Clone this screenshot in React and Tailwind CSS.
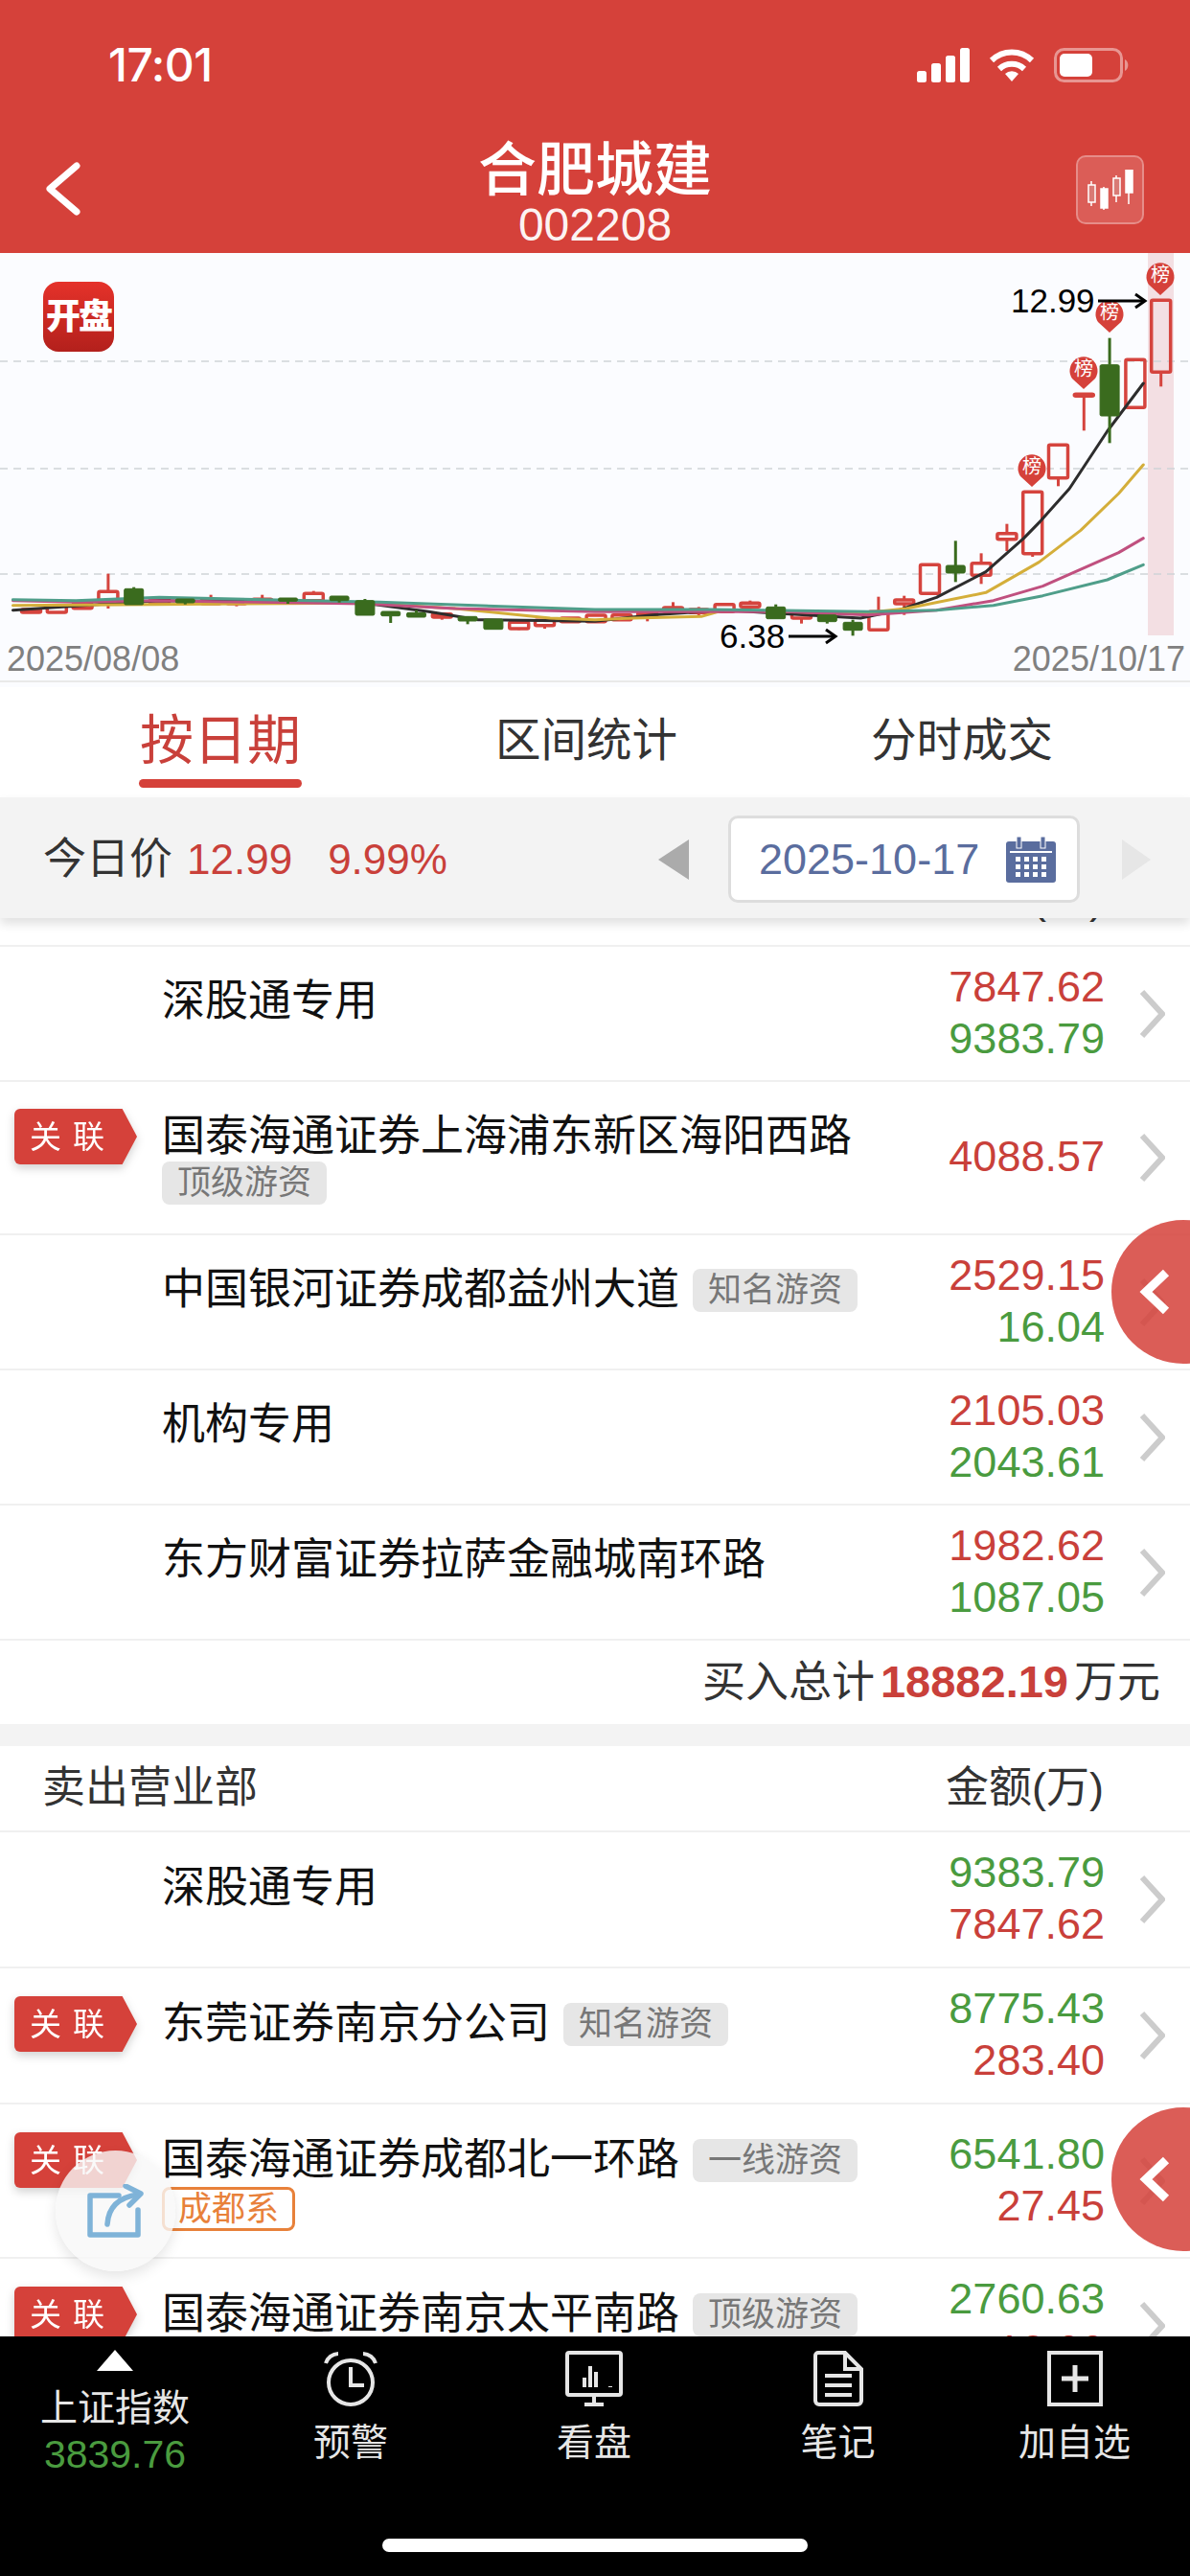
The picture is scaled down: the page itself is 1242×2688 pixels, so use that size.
import React from 'react';

const RED = '#c9403a';

// [kind, bodyTop, bodyBottom, wickTop, wickBottom] in zoomed chart units, y = 260 + v / 3
const candles = [
  ['r', 1128, 1137], ['r', 1117, 1137], ['r', 1110, 1124], ['r', 1072, 1105, 1016, 1125], ['g', 1063, 1113, 1058, 1113],
  ['r', 1095, 1110], ['g', 1095, 1107, 1095, 1112], ['r', 1098, 1110, 1082, 1110], ['r', 1100, 1110, 1100, 1118], ['r', 1096, 1108, 1082, 1108],
  ['g', 1092, 1102, 1092, 1110], ['r', 1078, 1100, 1070, 1100], ['g', 1086, 1100, 1086, 1106], ['g', 1100, 1146, 1095, 1146], ['g', 1134, 1148, 1134, 1170],
  ['g', 1138, 1152, 1130, 1152], ['r', 1142, 1152, 1142, 1160], ['g', 1150, 1164, 1150, 1174], ['g', 1158, 1190], ['r', 1168, 1188, 1168, 1192],
  ['r', 1162, 1178, 1162, 1188], ['r', 1155, 1166], ['r', 1146, 1166], ['r', 1145, 1160], ['r', 1138, 1148, 1138, 1165],
  ['r', 1122, 1135, 1105, 1135], ['r', 1128, 1138, 1120, 1150], ['r', 1112, 1135], ['r', 1108, 1120, 1100, 1135], ['g', 1120, 1157, 1112, 1157],
  ['r', 1140, 1155, 1140, 1172], ['g', 1145, 1166, 1145, 1172], ['g', 1168, 1193, 1160, 1210], ['r', 1135, 1192, 1088, 1196], ['r', 1098, 1110, 1085, 1145],
  ['r', 988, 1078], ['g', 990, 1014, 913, 1042], ['r', 983, 1021, 952, 1048], ['r', 890, 908, 860, 945], ['r', 760, 953, 760, 963],
  ['r', 613, 716, 613, 742], ['r', 454, 456, 454, 568], ['g', 362, 522, 278, 607], ['r', 346, 496], ['r', 160, 385, 160, 430],
];

// [x in the left half, y] then [x in the right half, y], zoomed units
const lines = [
  {
    color: '#2d2d2d',
    left: [[34, 1130], [285, 1110], [420, 1100], [960, 1108], [1130, 1135], [1260, 1160], [1568, 1165]],
    right: [[150, 1145], [340, 1130], [480, 1140], [700, 1155], [800, 1130], [900, 1090], [1030, 1010], [1130, 905], [1175, 850], [1250, 750], [1350, 570], [1445, 420]],
  },
  {
    color: '#d4ae3a',
    left: [[34, 1115], [400, 1112], [960, 1108], [1200, 1125], [1450, 1155], [1568, 1160]],
    right: [[100, 1155], [280, 1150], [340, 1130], [500, 1135], [700, 1140], [820, 1125], [1030, 1075], [1170, 980], [1280, 880], [1380, 765], [1445, 675]],
  },
  {
    color: '#c0507f',
    left: [[34, 1100], [200, 1105], [400, 1100], [960, 1110], [1200, 1125], [1568, 1135]],
    right: [[200, 1135], [500, 1135], [720, 1145], [900, 1130], [1050, 1100], [1180, 1055], [1380, 950], [1445, 905]],
  },
  {
    color: '#4f9e8a',
    left: [[34, 1097], [200, 1100], [420, 1090], [1000, 1105], [1568, 1128]],
    right: [[300, 1128], [720, 1135], [900, 1130], [1050, 1115], [1180, 1085], [1350, 1035], [1445, 988]],
  },
];

const zy = (v) => 260 + v / 3;
const lx = (v) => v / 2.525;
const rx = (v) => 621 + v / 2.525;

function linePoints(line) {
  const a = line.left.map(([x, y]) => `${lx(x)},${zy(y)}`);
  const b = line.right.map(([x, y]) => `${rx(x)},${zy(y)}`);
  return [...a, ...b].join(' ');
}

function Candle({ c, i }) {
  const [kind, top, bottom, wickTop, wickBottom] = c;
  const x = 32.5 + 26.8 * i;
  const color = kind === 'g' ? '#3a6b1e' : '#d5443e';
  return (
    <g>
      {wickTop !== undefined && wickTop < top && (
        <line x1={x} x2={x} y1={zy(wickTop)} y2={zy(top)} stroke={color} strokeWidth="3" />
      )}
      {wickBottom !== undefined && wickBottom > bottom && (
        <line x1={x} x2={x} y1={zy(bottom)} y2={zy(wickBottom)} stroke={color} strokeWidth="3" />
      )}
      <rect
        x={x - 10}
        y={zy(top)}
        width="20"
        height={Math.max(zy(bottom) - zy(top), 2)}
        rx="1.5"
        fill={kind === 'g' ? color : 'none'}
        stroke={color}
        strokeWidth={kind === 'g' ? 1 : 3.5}
      />
    </g>
  );
}

function Pin({ x, tip }) {
  const cy = tip - 21;
  return (
    <g>
      <path d={`M${x} ${tip} L${x - 12} ${cy + 10} A14.5 14.5 0 1 1 ${x + 12} ${cy + 10} Z`} fill="#d5413a" />
      <text x={x} y={cy + 7} textAnchor="middle" fontSize="20" fill="#fff" fontFamily="Noto Sans CJK SC, sans-serif">榜</text>
    </g>
  );
}

function Arrow({ x1, x2, y }) {
  return (
    <g stroke="#000" strokeWidth="3" fill="none">
      <line x1={x1} x2={x2} y1={y} y2={y} />
      <path d={`M${x2 - 10} ${y - 7} L${x2} ${y} L${x2 - 10} ${y + 7}`} />
    </g>
  );
}

function KlineChart() {
  return (
    <svg viewBox="0 264 1242 400" className="block h-[400px] w-[1242px] overflow-visible">
      <rect x="1198" y="264" width="27" height="399" fill="#f3dfe3" />
      {[377, 489, 599].map((y) => (
        <line key={y} x1="0" x2="1242" y1={y} y2={y} stroke="#cfd3d8" strokeWidth="1.5" strokeDasharray="8 6" />
      ))}
      {candles.map((c, i) => (c[0] === 'r' ? <Candle key={i} c={c} i={i} /> : null))}
      {lines.map((l) => (
        <polyline key={l.color} points={linePoints(l)} fill="none" stroke={l.color} strokeWidth="3" strokeLinejoin="round" strokeLinecap="round" />
      ))}
      {candles.map((c, i) => (c[0] === 'g' ? <Candle key={i} c={c} i={i} /> : null))}
      <Pin x={1211} tip={308} />
      <Pin x={1158} tip={347} />
      <Pin x={1131} tip={406} />
      <Pin x={1077} tip={508} />
      <text x="1055" y="326" fontSize="35" fill="#000" fontFamily="Liberation Sans, sans-serif">12.99</text>
      <Arrow x1={1146} x2={1195} y={314} />
      <text x="751" y="676" fontSize="35" fill="#000" fontFamily="Liberation Sans, sans-serif">6.38</text>
      <Arrow x1={823} x2={872} y={664} />
    </svg>
  );
}

function StatusIcons() {
  return (
    <div className="flex items-center">
      <svg width="56" height="36" viewBox="0 0 56 36" fill="#fff">
        <rect x="0" y="24" width="10" height="12" rx="2.5" />
        <rect x="15" y="16" width="10" height="20" rx="2.5" />
        <rect x="30" y="8" width="10" height="28" rx="2.5" />
        <rect x="45" y="0" width="10" height="36" rx="2.5" />
      </svg>
      <svg className="ml-[19px]" width="48" height="36" viewBox="0 0 48 36" fill="none" stroke="#fff" strokeWidth="6">
        <path d="M3 13 A30 30 0 0 1 45 13" />
        <path d="M11 22 A19 19 0 0 1 37 22" />
        <path d="M17 27 L24 35 L31 27 A10 10 0 0 0 17 27 Z" fill="#fff" stroke="none" />
      </svg>
      <svg className="ml-[20px]" width="78" height="36" viewBox="0 0 78 36" fill="none">
        <rect x="1.5" y="1.5" width="69" height="33" rx="9" stroke="#fff" strokeOpacity="0.45" strokeWidth="3" />
        <rect x="6" y="6" width="34" height="24" rx="5" fill="#fff" />
        <path d="M74 12 A7 7 0 0 1 74 24 Z" fill="#fff" fillOpacity="0.45" />
      </svg>
    </div>
  );
}

function Header() {
  return (
    <header className="h-[264px] shrink-0 bg-[#d5413a] text-white">
      <div className="flex h-[136px] items-center justify-between pl-[113px] pr-[64px]">
        <span className="font-['Inter',sans-serif] text-[48px] font-medium tracking-[-0.5px]">17:01</span>
        <StatusIcons />
      </div>
      <div className="grid h-[128px] grid-cols-[1fr_auto_1fr] px-[48px]">
        <div className="flex items-center">
          <svg width="38" height="56" viewBox="0 0 38 56" fill="none" stroke="#fff" strokeWidth="7" strokeLinecap="round" strokeLinejoin="round" className="-ml-[1px] -mt-[6px]">
            <path d="M33 4 L5 28 L33 52" />
          </svg>
        </div>
        <div className="flex flex-col items-center pt-[10px]">
          <div className="text-[61px] font-medium leading-[64px]">合肥城建</div>
          <div className="text-[48px] leading-[50px] text-white/95">002208</div>
        </div>
        <div className="flex items-center justify-end">
          <div className="-mt-[4px] flex h-[72px] w-[71px] items-center justify-center rounded-[10px] border-2 border-white/30 bg-white/15">
            <svg width="50" height="42" viewBox="0 0 50 42" fill="none" stroke="#fff" strokeWidth="1.5">
              <path d="M5 12 V38 M18 18 V42 M31 6 V34 M44 0 V36" />
              <rect x="2" y="16" width="7" height="18" fill="#d97a75" />
              <rect x="15" y="20" width="7" height="20" fill="#fff" />
              <rect x="28" y="9" width="7" height="18" fill="#d97a75" />
              <rect x="41" y="0" width="7" height="24" fill="#fff" />
            </svg>
          </div>
        </div>
      </div>
    </header>
  );
}

function ChartPanel() {
  return (
    <section className="relative h-[448px] shrink-0 border-b-2 border-[#e9e9e9] bg-[#fbfcff]">
      <KlineChart />
      <div className="absolute left-[45px] top-[30px] flex h-[73px] w-[74px] items-center justify-center rounded-[16px] bg-gradient-to-b from-[#e5322a] to-[#b3201c] text-[36px] font-black leading-none tracking-[-2px] text-white">
        开盘
      </div>
      <div className="flex justify-between pl-[7px] pr-[5px] pt-[2px] text-[36px] leading-[44px] text-[#808080]">
        <span>2025/08/08</span>
        <span>2025/10/17</span>
      </div>
    </section>
  );
}

function Tabs() {
  return (
    <div className="shrink-0 bg-[#fbfcff] pt-[5px]">
      <div className="flex h-[115px] gap-[202px] bg-white pl-[145px] pt-[21px] text-[47.5px] leading-[70px] text-[#333]">
        <div className="w-[170px]">
          <div className="text-center text-[56px] text-[#c9403a]">按日期</div>
          <div className="mt-[5px] h-[9px] rounded-full bg-[#d5413a]" />
        </div>
        <div>区间统计</div>
        <div>分时成交</div>
      </div>
    </div>
  );
}

function PriceBar() {
  return (
    <div className="relative z-10 flex h-[126px] shrink-0 items-center bg-[#f3f3f3] pl-[45px] pr-[41px] pt-[3px] text-[44px] shadow-[0_6px_10px_rgba(0,0,0,0.12)]">
      <span className="text-[45px] text-[#333]">今日价</span>
      <span className="ml-[15px] text-[#c9403a]">12.99</span>
      <span className="ml-[37px] text-[#c9403a]">9.99%</span>
      <svg className="ml-auto" width="32" height="42" viewBox="0 0 32 42">
        <path d="M32 0 V42 L0 21 Z" fill="#ababab" />
      </svg>
      <div className="ml-[41px] flex h-[91px] w-[367px] items-center justify-between rounded-[10px] border-[3px] border-[#dddddd] bg-white pl-[29px] pr-[22px] text-[45px] text-[#5a6d9e]">
        <span>2025-10-17</span>
        <svg width="52" height="48" viewBox="0 0 52 48">
          <rect x="0" y="5" width="52" height="43" rx="3" fill="#5a6d9e" />
          <rect x="11" y="0" width="5" height="12" fill="#5a6d9e" stroke="#fff" strokeWidth="1" />
          <rect x="36" y="0" width="5" height="12" fill="#5a6d9e" stroke="#fff" strokeWidth="1" />
          <rect x="4" y="15" width="44" height="2" fill="#fff" />
          <g fill="#fff">
            {[21, 29, 37].map((y) => [10, 19, 28, 37].map((x) => <rect key={`${x}-${y}`} x={x} y={y} width="5" height="5" />))}
          </g>
        </svg>
      </div>
      <svg className="ml-[44px]" width="30" height="42" viewBox="0 0 30 42">
        <path d="M0 0 V42 L30 21 Z" fill="#e6e6e6" />
      </svg>
    </div>
  );
}

function Badge() {
  return (
    <div className="drop-shadow-[0_4px_5px_rgba(0,0,0,0.18)]">
      <div className="flex h-[58px] w-[128px] items-center gap-[12px] rounded-l-[6px] bg-[#d5413a] pl-[16px] text-[33px] leading-none text-white [clip-path:polygon(0_0,88%_0,100%_50%,88%_100%,0_100%)]">
        <span>关</span>
        <span>联</span>
      </div>
    </div>
  );
}

function Chip({ children, className = '' }) {
  return (
    <span className={`inline-flex h-[45px] items-center rounded-[8px] bg-[#e6e6e6] px-[16px] text-[35px] text-[#777] ${className}`}>{children}</span>
  );
}

function Chevron() {
  return (
    <svg width="27" height="52" viewBox="0 0 27 52" fill="none" stroke="#cccccc" strokeWidth="6">
      <path d="M3 3 L24 26 L3 49" />
    </svg>
  );
}

function Row({ badge, name, tag, sub, orange, a, b, sell }) {
  return (
    <div className="flex items-center border-b-2 border-[#f0f0f0] bg-white pl-[15px] pr-[26px]">
      <div className={`flex flex-1 self-start ${sell ? 'pb-[27px] pt-[29px]' : 'pb-[27px] pt-[28px]'}`}>
        <div className="w-[154px] shrink-0">{badge && <Badge />}</div>
        <div className="min-h-[84px]">
          <div className="flex items-center gap-[14px] text-[45px] leading-[58px] text-[#111]">
            <span>{name}</span>
            {tag && <Chip>{tag}</Chip>}
          </div>
          {sub && <Chip className="-mt-[3px] mb-[3px]">{sub}</Chip>}
          {orange && (
            <span className="-mt-[1px] inline-flex h-[46px] items-center rounded-[8px] border-[3px] border-[#e8813a] px-[14px] text-[35px] text-[#e8813a]">{orange}</span>
          )}
        </div>
      </div>
      <div className="-mt-[2px] text-right text-[45px] leading-[54px]">
        <div style={{ color: a.c }}>{a.v}</div>
        {b && <div style={{ color: b.c }}>{b.v}</div>}
      </div>
      <div className="ml-[36px] flex items-center"><Chevron /></div>
    </div>
  );
}

const R = (v) => ({ v, c: RED });
const G = (v) => ({ v, c: '#4a9b3f' });

function ListHead({ left, scrolled }) {
  return (
    <div className={`flex h-[90px] items-center justify-between border-b-2 border-[#f0f0f0] bg-white pl-[44px] pr-[90px] text-[45px] text-[#333] ${scrolled ? 'pb-[8px]' : ''}`}>
      <span>{left}</span>
      <span>金额(万)</span>
    </div>
  );
}

function TradeList() {
  return (
    <div className="min-h-0 flex-1 overflow-hidden">
      <div className="-mt-[60px]">
        <ListHead scrolled left="买入营业部" />
        <Row name="深股通专用" a={R('7847.62')} b={G('9383.79')} />
        <Row badge name="国泰海通证券上海浦东新区海阳西路" sub="顶级游资" a={R('4088.57')} />
        <Row name="中国银河证券成都益州大道" tag="知名游资" a={R('2529.15')} b={G('16.04')} />
        <Row name="机构专用" a={R('2105.03')} b={G('2043.61')} />
        <Row name="东方财富证券拉萨金融城南环路" a={R('1982.62')} b={G('1087.05')} />
        <div className="flex h-[87px] items-center justify-end pr-[31px] text-[45px] text-[#333]">
          买入总计<span className="mx-[6px] text-[47px] font-bold text-[#c9403a]">18882.19</span>万元
        </div>
        <div className="h-[23px] bg-[#f3f3f3]" />
        <ListHead left="卖出营业部" />
        <Row sell name="深股通专用" a={G('9383.79')} b={R('7847.62')} />
        <Row sell badge name="东莞证券南京分公司" tag="知名游资" a={G('8775.43')} b={R('283.40')} />
        <Row sell badge name="国泰海通证券成都北一环路" tag="一线游资" orange="成都系" a={G('6541.80')} b={R('27.45')} />
        <Row sell badge name="国泰海通证券南京太平南路" tag="顶级游资" a={G('2760.63')} b={R('12.00')} />
      </div>
    </div>
  );
}

function NavItem({ width, icon, label }) {
  return (
    <div className="flex shrink-0 flex-col items-center pt-[1px]" style={{ width }}>
      {icon}
      <div className="mt-[16px] text-[39px] leading-[44px] text-[#e6e6e6]">{label}</div>
    </div>
  );
}

const navStroke = { fill: 'none', stroke: '#e6e6e6', strokeWidth: 4 };

function BottomNav() {
  return (
    <nav className="relative h-[250px] shrink-0 bg-black">
      <div className="flex pt-[14px]">
        <div className="flex w-[240px] shrink-0 flex-col items-center">
          <svg width="38" height="22" viewBox="0 0 38 22"><path d="M19 0 L38 22 H0 Z" fill="#fff" /></svg>
          <div className="mt-[16px] text-[39px] leading-[46px] text-[#e6e6e6]">上证指数</div>
          <div className="-mt-[1px] text-[41px] leading-[52px] text-[#4a9b3f]">3839.76</div>
        </div>
        <NavItem
          width={252}
          label="预警"
          icon={
            <svg width="58" height="58" viewBox="0 0 58 58" {...navStroke}>
              <circle cx="29" cy="33" r="23" />
              <path d="M29 17 V36 H43" />
              <path d="M3 13 A14 14 0 0 1 16 3 M55 13 A14 14 0 0 0 42 3" />
            </svg>
          }
        />
        <NavItem
          width={256}
          label="看盘"
          icon={
            <svg width="60" height="58" viewBox="0 0 60 58" {...navStroke}>
              <rect x="2" y="2" width="56" height="44" rx="2" />
              <path d="M20 56 H40 M30 46 V56" />
              <path d="M20 38 V28 M26 38 V16 M32 38 V22 M47 38 V37" />
            </svg>
          }
        />
        <NavItem
          width={253}
          label="笔记"
          icon={
            <svg width="52" height="58" viewBox="0 0 52 58" {...navStroke}>
              <path d="M5 2 H33 L50 19 V52 A4 4 0 0 1 46 56 H6 A4 4 0 0 1 2 52 V5 A3 3 0 0 1 5 2 Z" />
              <path d="M33 2 V19 H50" />
              <path d="M12 26 H40 M12 36 H40 M12 46 H40" />
            </svg>
          }
        />
        <NavItem
          width={241}
          label="加自选"
          icon={
            <svg width="58" height="58" viewBox="0 0 58 58" {...navStroke}>
              <rect x="2" y="2" width="54" height="54" />
              <path d="M29 15 V43 M15 29 H43" strokeWidth="5" />
            </svg>
          }
        />
      </div>
      <div className="absolute bottom-[25px] left-[399px] h-[14px] w-[444px] rounded-full bg-white" />
    </nav>
  );
}

function SideToggle({ top }) {
  return (
    <div className={`absolute left-[1160px] flex h-[150px] w-[150px] items-center rounded-full bg-[#d5413a]/85 pl-[29px] ${top}`}>
      <svg width="32" height="48" viewBox="0 0 32 48" fill="none" stroke="#fff" strokeWidth="9">
        <path d="M28 4 L7 24 L28 44" />
      </svg>
    </div>
  );
}

export default function App() {
  return (
    <div className="relative flex h-[2688px] w-[1242px] flex-col overflow-hidden bg-white font-['Liberation_Sans','Noto_Sans_CJK_SC',sans-serif]">
      <Header />
      <ChartPanel />
      <Tabs />
      <PriceBar />
      <TradeList />
      <BottomNav />

      {/* floating buttons over the list */}
      <SideToggle top="top-[1273px]" />
      <SideToggle top="top-[2199px]" />
      <div className="absolute left-[58px] top-[2244px] flex h-[126px] w-[125px] items-center justify-center rounded-full bg-[#f7f7f7]/80 shadow-[0_6px_14px_rgba(0,0,0,0.1)]">
        <svg width="60" height="56" viewBox="0 0 60 56" fill="none" stroke="#7fb3d8" strokeWidth="5.5" strokeLinecap="round" strokeLinejoin="round">
          <path d="M33 12 H3 V53 H53 V27" />
          <path d="M21 42 C22 26 31 14 53 11" />
          <path d="M40 2 L56 10 L44 22" />
        </svg>
      </div>
    </div>
  );
}
